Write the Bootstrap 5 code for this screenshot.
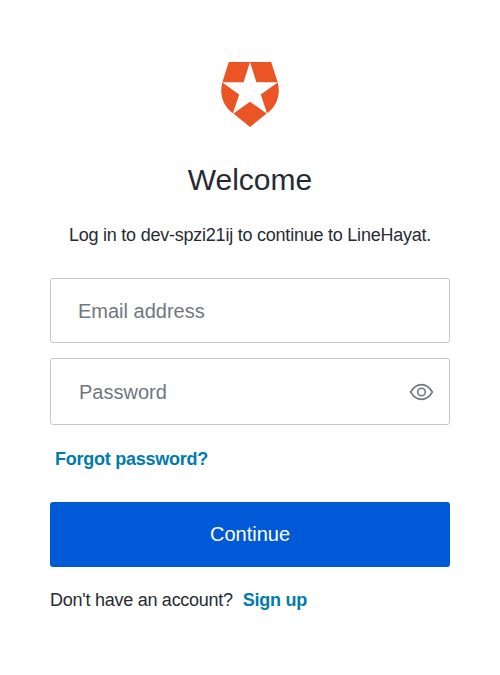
<!DOCTYPE html>
<html lang="en">
<head>
<meta charset="utf-8">
<meta name="viewport" content="width=device-width, initial-scale=1">
<title>Log in</title>
<link href="https://cdn.jsdelivr.net/npm/bootstrap@5.3.0/dist/css/bootstrap.min.css" rel="stylesheet">
<style>
body{font-family:"Liberation Sans",Arial,sans-serif;color:#262b33;background:#fff;font-size:18px;line-height:24px}
.login-panel{width:400px;padding-top:62px}
.brand-logo{width:58px;height:65px}
.login-title{font-size:30px;line-height:40px;margin-top:33px;font-weight:400}
.login-intro{margin-top:23px;letter-spacing:-.23px;white-space:nowrap}
.login-field{border:1px solid #c2c8d0;border-radius:3px;height:65px}
.login-field .form-control{font-size:20px;color:#2d333a;padding:2px 0 0 27px;height:100%}
.login-field .form-control::placeholder{color:#6f7780;opacity:1}
.email-field{margin-top:31px}
.password-field{margin-top:15px;height:67px}
.password-field .form-control{padding-left:28px}
.eye-btn{padding:0 15px 0 0;color:#6f7780}
.login-link{color:#007bad;font-weight:700;text-decoration:none}
.forgot-row{margin:22px 0 0 5px;letter-spacing:-.25px}
.continue-btn{background:#0059d6;color:#fff;height:65px;border-radius:3px;font-size:20px;margin-top:31px;padding:0 0 2px}
.continue-btn:hover{background:#004fc0;color:#fff}
.signup-row{margin-top:21px;gap:10px;letter-spacing:-.26px}
</style>
</head>
<body>
<main class="login-panel mx-auto d-flex flex-column">
<svg class="brand-logo mx-auto" viewBox="0 0 58 65" aria-hidden="true"><path fill="#eb5424" d="M7.8 0H50.2L56.6 20C60 32 56 44 46 51.3L29 65L12 51.3C2 44-2 32 1.4 20Z"/><path fill="#fff" d="M29 0L35.4 20.2H57L39.8 32.4L46.3 52L29 39.7L11.7 52L18.2 32.4L1 20.2H22.6Z"/></svg>
<h1 class="login-title text-center mb-0">Welcome</h1>
<p class="login-intro text-center mb-0">Log in to dev-spzi21ij to continue to LineHayat.</p>
<form>
<div class="login-field email-field"><input class="form-control border-0 bg-transparent shadow-none" type="email" placeholder="Email address" aria-label="Email address"></div>
<div class="login-field password-field d-flex align-items-center"><input class="form-control border-0 bg-transparent shadow-none" type="password" placeholder="Password" aria-label="Password"><button class="btn border-0 eye-btn d-flex" type="button" aria-label="Show password"><svg width="25" height="18" viewBox="0 0 25 18" fill="none" stroke="currentColor" stroke-width="1.6"><path d="M1.6 9C4.5 4.2 7.8 1.6 12.5 1.6S20.5 4.2 23.4 9C20.5 13.8 17.2 16.4 12.5 16.4S4.5 13.8 1.6 9Z"/><circle cx="12.5" cy="9" r="3.8"/></svg></button></div>
<div class="forgot-row"><a class="login-link" href="#">Forgot password?</a></div>
<button class="btn continue-btn w-100 border-0" type="button">Continue</button>
</form>
<div class="signup-row d-flex"><span>Don't have an account?</span><a class="login-link" href="#">Sign up</a></div>
</main>
<script src="https://cdn.jsdelivr.net/npm/bootstrap@5.3.0/dist/js/bootstrap.bundle.min.js"></script>
</body>
</html>
